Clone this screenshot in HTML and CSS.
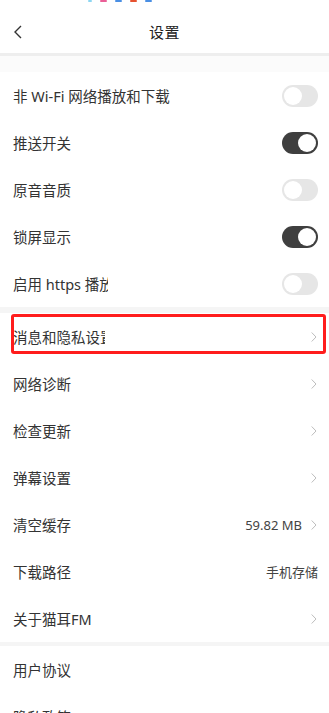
FILE: index.html
```html
<!DOCTYPE html>
<html lang="zh-CN">
<head>
    <meta charset="UTF-8">
    <meta name="viewport" content="width=device-width, initial-scale=1.0">
    <title>设置</title>
    <link rel="stylesheet" href="styles.css">
</head>
<body>
    <div class="status">
        <span class="mark mark-sky"></span>
        <span class="mark mark-pink"></span>
        <span class="mark mark-blue"></span>
        <span class="mark mark-red"></span>
        <span class="mark mark-blue"></span>
    </div>
    <div class="header">
        <svg class="back" width="10" height="14" viewBox="0 0 10 14">
            <polyline points="8,1 2,7 8,13" fill="none" stroke="#333" stroke-width="1.4"/>
        </svg>
        <div class="title">设置</div>
    </div>
    <div class="gap gap-top"></div>

    <div class="section">
        <div class="row">
            <span class="label">非 Wi-Fi 网络播放和下载</span>
            <span class="switch"></span>
        </div>
        <div class="row">
            <span class="label">推送开关</span>
            <span class="switch on"></span>
        </div>
        <div class="row">
            <span class="label">原音音质</span>
            <span class="switch"></span>
        </div>
        <div class="row">
            <span class="label">锁屏显示</span>
            <span class="switch on"></span>
        </div>
        <div class="row">
            <span class="label clip clip-wide">启用 https 播放</span>
            <span class="switch"></span>
        </div>
    </div>
    <div class="gap"></div>

    <div class="section">
        <div class="row">
            <span class="label clip">消息和隐私设置</span>
            <span class="arrow"></span>
            <div class="highlight"></div>
        </div>
        <div class="row">
            <span class="label">网络诊断</span>
            <span class="arrow"></span>
        </div>
        <div class="row">
            <span class="label">检查更新</span>
            <span class="arrow"></span>
        </div>
        <div class="row">
            <span class="label">弹幕设置</span>
            <span class="arrow"></span>
        </div>
        <div class="row">
            <span class="label">清空缓存</span>
            <span class="value">59.82 MB</span>
            <span class="arrow"></span>
        </div>
        <div class="row">
            <span class="label">下载路径</span>
            <span class="value">手机存储</span>
        </div>
        <div class="row">
            <span class="label">关于猫耳FM</span>
            <span class="arrow"></span>
        </div>
    </div>
    <div class="gap gap-small"></div>

    <div class="section">
        <div class="row">
            <span class="label">用户协议</span>
        </div>
        <div class="row">
            <span class="label">隐私政策</span>
        </div>
    </div>
</body>
</html>
```

FILE: styles.css
```css
body, html {
    margin: 0;
    padding: 0;
    background: #fff;
    font-family: "Noto Sans", "Noto Sans CJK SC", sans-serif;
    color: #333;
    overflow: hidden;
}
.status {
    height: 10px;
    display: flex;
    align-items: flex-start;
    padding-left: 88px;
    gap: 8px;
}
.mark {
    width: 7px;
    height: 1.5px;
    border-radius: 1px;
}
.mark-sky { background: #8cd6f2; width: 4px; }
.mark-pink { background: #ea5f97; }
.mark-blue { background: #4a8fe4; }
.mark-red { background: #e6522f; }
.header {
    position: relative;
    height: 43px;
    display: flex;
    align-items: center;
    justify-content: center;
    border-bottom: 3px solid #eeeeee;
}
.back {
    position: absolute;
    left: 13px;
    top: 15px;
}
.title {
    font-size: 15px;
    color: #222;
    letter-spacing: 0.5px;
}
.gap {
    height: 6px;
    background: #f5f5f5;
}
.gap-top {
    height: 16px;
    background: #fbfbfb;
}
.gap-small {
    height: 4px;
}
.row {
    position: relative;
    height: 47px;
    display: flex;
    align-items: center;
    padding: 0 11px 0 13px;
}
.label {
    flex: 1;
    font-size: 14.5px;
    white-space: nowrap;
}
.label.clip {
    flex: 0 0 auto;
    width: 92px;
    overflow: hidden;
    margin-right: auto;
}
.label.clip-wide {
    width: 95px;
}
.value {
    font-size: 13px;
    color: #444;
}
.value + .arrow {
    margin-left: 9px;
}
.arrow {
    width: 6px;
    height: 10px;
    background: url("data:image/svg+xml;utf8,<svg xmlns='http://www.w3.org/2000/svg' width='6' height='10' viewBox='0 0 6 10'><polyline points='0.7,0.5 5,5 0.7,9.5' fill='none' stroke='%23bdbdbd' stroke-width='1'/></svg>") no-repeat center;
    margin-right: 1px;
}
.switch {
    position: relative;
    width: 36px;
    height: 22px;
    border-radius: 11px;
    background: #e6e6e6;
}
.switch:before {
    content: "";
    position: absolute;
    top: 2px;
    left: 2px;
    width: 18px;
    height: 18px;
    border-radius: 50%;
    background: #fff;
}
.switch.on {
    background: #3f3f3f;
}
.switch.on:before {
    left: 16px;
}
.highlight {
    position: absolute;
    left: 11px;
    right: 3px;
    top: 1px;
    height: 40px;
    box-sizing: border-box;
    border: 3px solid #ff1c1c;
    border-radius: 3px;
    pointer-events: none;
}
```
